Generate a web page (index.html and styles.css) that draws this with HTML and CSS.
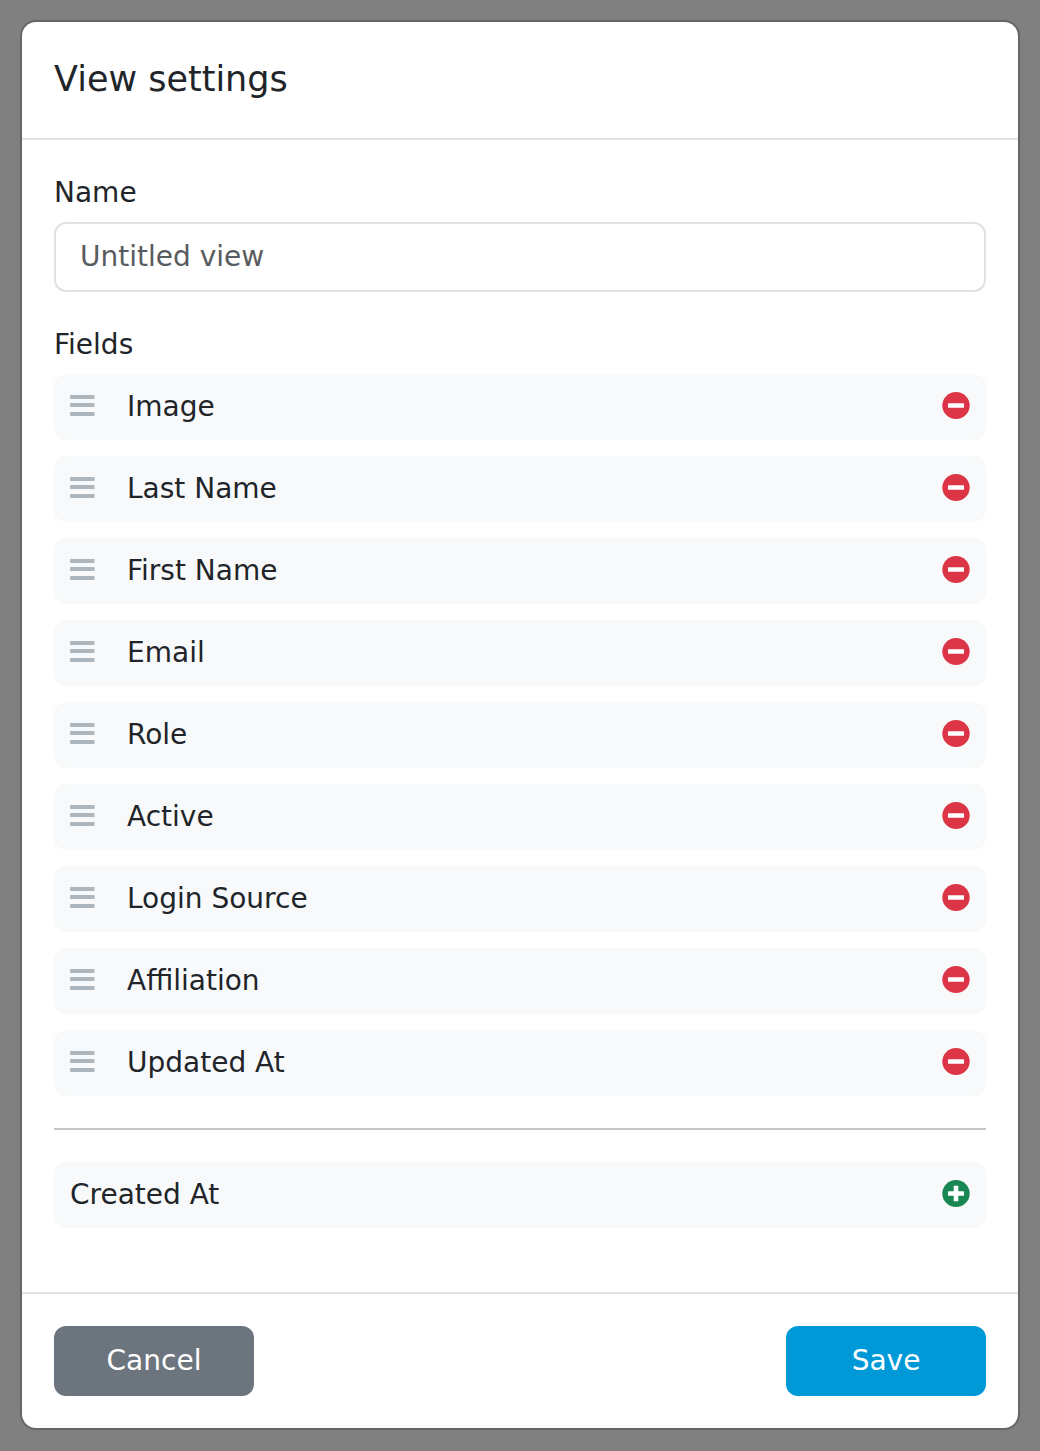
FILE: index.html
```html
<!DOCTYPE html>
<html lang="en">
<head>
<meta charset="utf-8">
<title>View settings</title>
<link rel="stylesheet" href="styles.css">
</head>
<body>
<svg class="sprite" aria-hidden="true">
  <symbol id="bars" viewBox="0 0 25 28"><rect y="3" width="24.600" height="4" rx=".8"/><rect y="11" width="24.600" height="4" rx=".8"/><rect y="20" width="24.600" height="4" rx=".8"/></symbol>
  <symbol id="minus" viewBox="0 0 28 28"><ellipse cx="14" cy="13.500" rx="13.700" ry="13.500"/><rect class="mark" x="6" y="11.200" width="16" height="4.500" rx=".5"/></symbol>
  <symbol id="plus" viewBox="0 0 28 28"><ellipse cx="14" cy="13.500" rx="13.700" ry="13.500"/><rect class="mark" x="6" y="11.200" width="16" height="4.500" rx=".5"/><rect class="mark" x="11.700" y="5.700" width="4.600" height="15.600" rx=".5"/></symbol>
</svg>
<main class="modal">
  <header class="modal-header"><h1>View settings</h1></header>
  <div class="modal-body">
    <label class="label" for="name">Name</label>
    <input class="input" id="name" type="text" placeholder="Untitled view">
    <div class="label fields-label">Fields</div>
    <ul class="fields">
      <li class="field"><svg class="handle"><use href="#bars"/></svg><span>Image</span><svg class="action remove"><use href="#minus"/></svg></li>
      <li class="field"><svg class="handle"><use href="#bars"/></svg><span>Last Name</span><svg class="action remove"><use href="#minus"/></svg></li>
      <li class="field"><svg class="handle"><use href="#bars"/></svg><span>First Name</span><svg class="action remove"><use href="#minus"/></svg></li>
      <li class="field"><svg class="handle"><use href="#bars"/></svg><span>Email</span><svg class="action remove"><use href="#minus"/></svg></li>
      <li class="field"><svg class="handle"><use href="#bars"/></svg><span>Role</span><svg class="action remove"><use href="#minus"/></svg></li>
      <li class="field"><svg class="handle"><use href="#bars"/></svg><span>Active</span><svg class="action remove"><use href="#minus"/></svg></li>
      <li class="field"><svg class="handle"><use href="#bars"/></svg><span>Login Source</span><svg class="action remove"><use href="#minus"/></svg></li>
      <li class="field"><svg class="handle"><use href="#bars"/></svg><span>Affiliation</span><svg class="action remove"><use href="#minus"/></svg></li>
      <li class="field"><svg class="handle"><use href="#bars"/></svg><span>Updated At</span><svg class="action remove"><use href="#minus"/></svg></li>
    </ul>
    <hr class="divider">
    <ul class="fields">
      <li class="field"><span>Created At</span><svg class="action add"><use href="#plus"/></svg></li>
    </ul>
  </div>
  <footer class="modal-footer">
    <button class="button cancel" type="button">Cancel</button>
    <button class="button save" type="button">Save</button>
  </footer>
</main>
</body>
</html>
```
FILE: styles.css
```css
* { box-sizing: border-box; }
body {
  margin: 0;
  height: 1451px;
  padding: 20px 20px 21px;
  background: #808080;
  color: #212529;
  font: 28px/42px "DejaVu Sans", sans-serif;
  overflow: hidden;
}
.sprite { display: none; }
.modal {
  height: 1410px;
  display: flex;
  flex-direction: column;
  background: #fff;
  background-clip: padding-box;
  border: 2px solid rgba(0, 0, 0, 0.2);
  border-radius: 16px;
}
.modal-header {
  height: 118px;
  padding: 32px;
  border-bottom: 2px solid #dee2e6;
}
h1 { margin: 0; font-size: 35px; font-weight: 400; line-height: 50px; }
.modal-body { flex: 1; padding: 32px; }
.label { display: block; height: 50px; }
.input {
  display: block;
  width: 100%;
  height: 70px;
  padding: 11px 24px 13px;
  border: 2px solid #dee2e6;
  border-radius: 12px;
  background: #fff;
  font: inherit;
}
.input::placeholder { color: #595c5f; opacity: 1; }
.fields-label { margin-top: 32px; }
.fields {
  display: flex;
  flex-direction: column;
  gap: 16px;
  margin: 0;
  padding: 0;
  list-style: none;
}
.field {
  display: flex;
  align-items: center;
  height: 66px;
  padding: 0 16px;
  border-radius: 12px;
  background: #f8f9fa;
}
.handle { width: 25px; height: 28px; margin: 0 32px 2px 0; fill: #adb5bd; }
.action { width: 28px; height: 28px; margin: 0 0 2px auto; }
.mark { fill: #fff; }
.remove { fill: #dc3545; }
.add { fill: #198754; }
.divider { height: 2px; margin: 32px 0; border: 0; background: #c7c8c9; }
.modal-footer {
  display: flex;
  justify-content: space-between;
  height: 136px;
  padding: 32px;
  border-top: 2px solid #dee2e6;
}
.button {
  width: 200px;
  height: 70px;
  padding: 0;
  border: 0;
  border-radius: 12px;
  color: #fff;
  font: inherit;
}
.cancel { background: #6c757d; }
.save { background: #0099d8; }
```
